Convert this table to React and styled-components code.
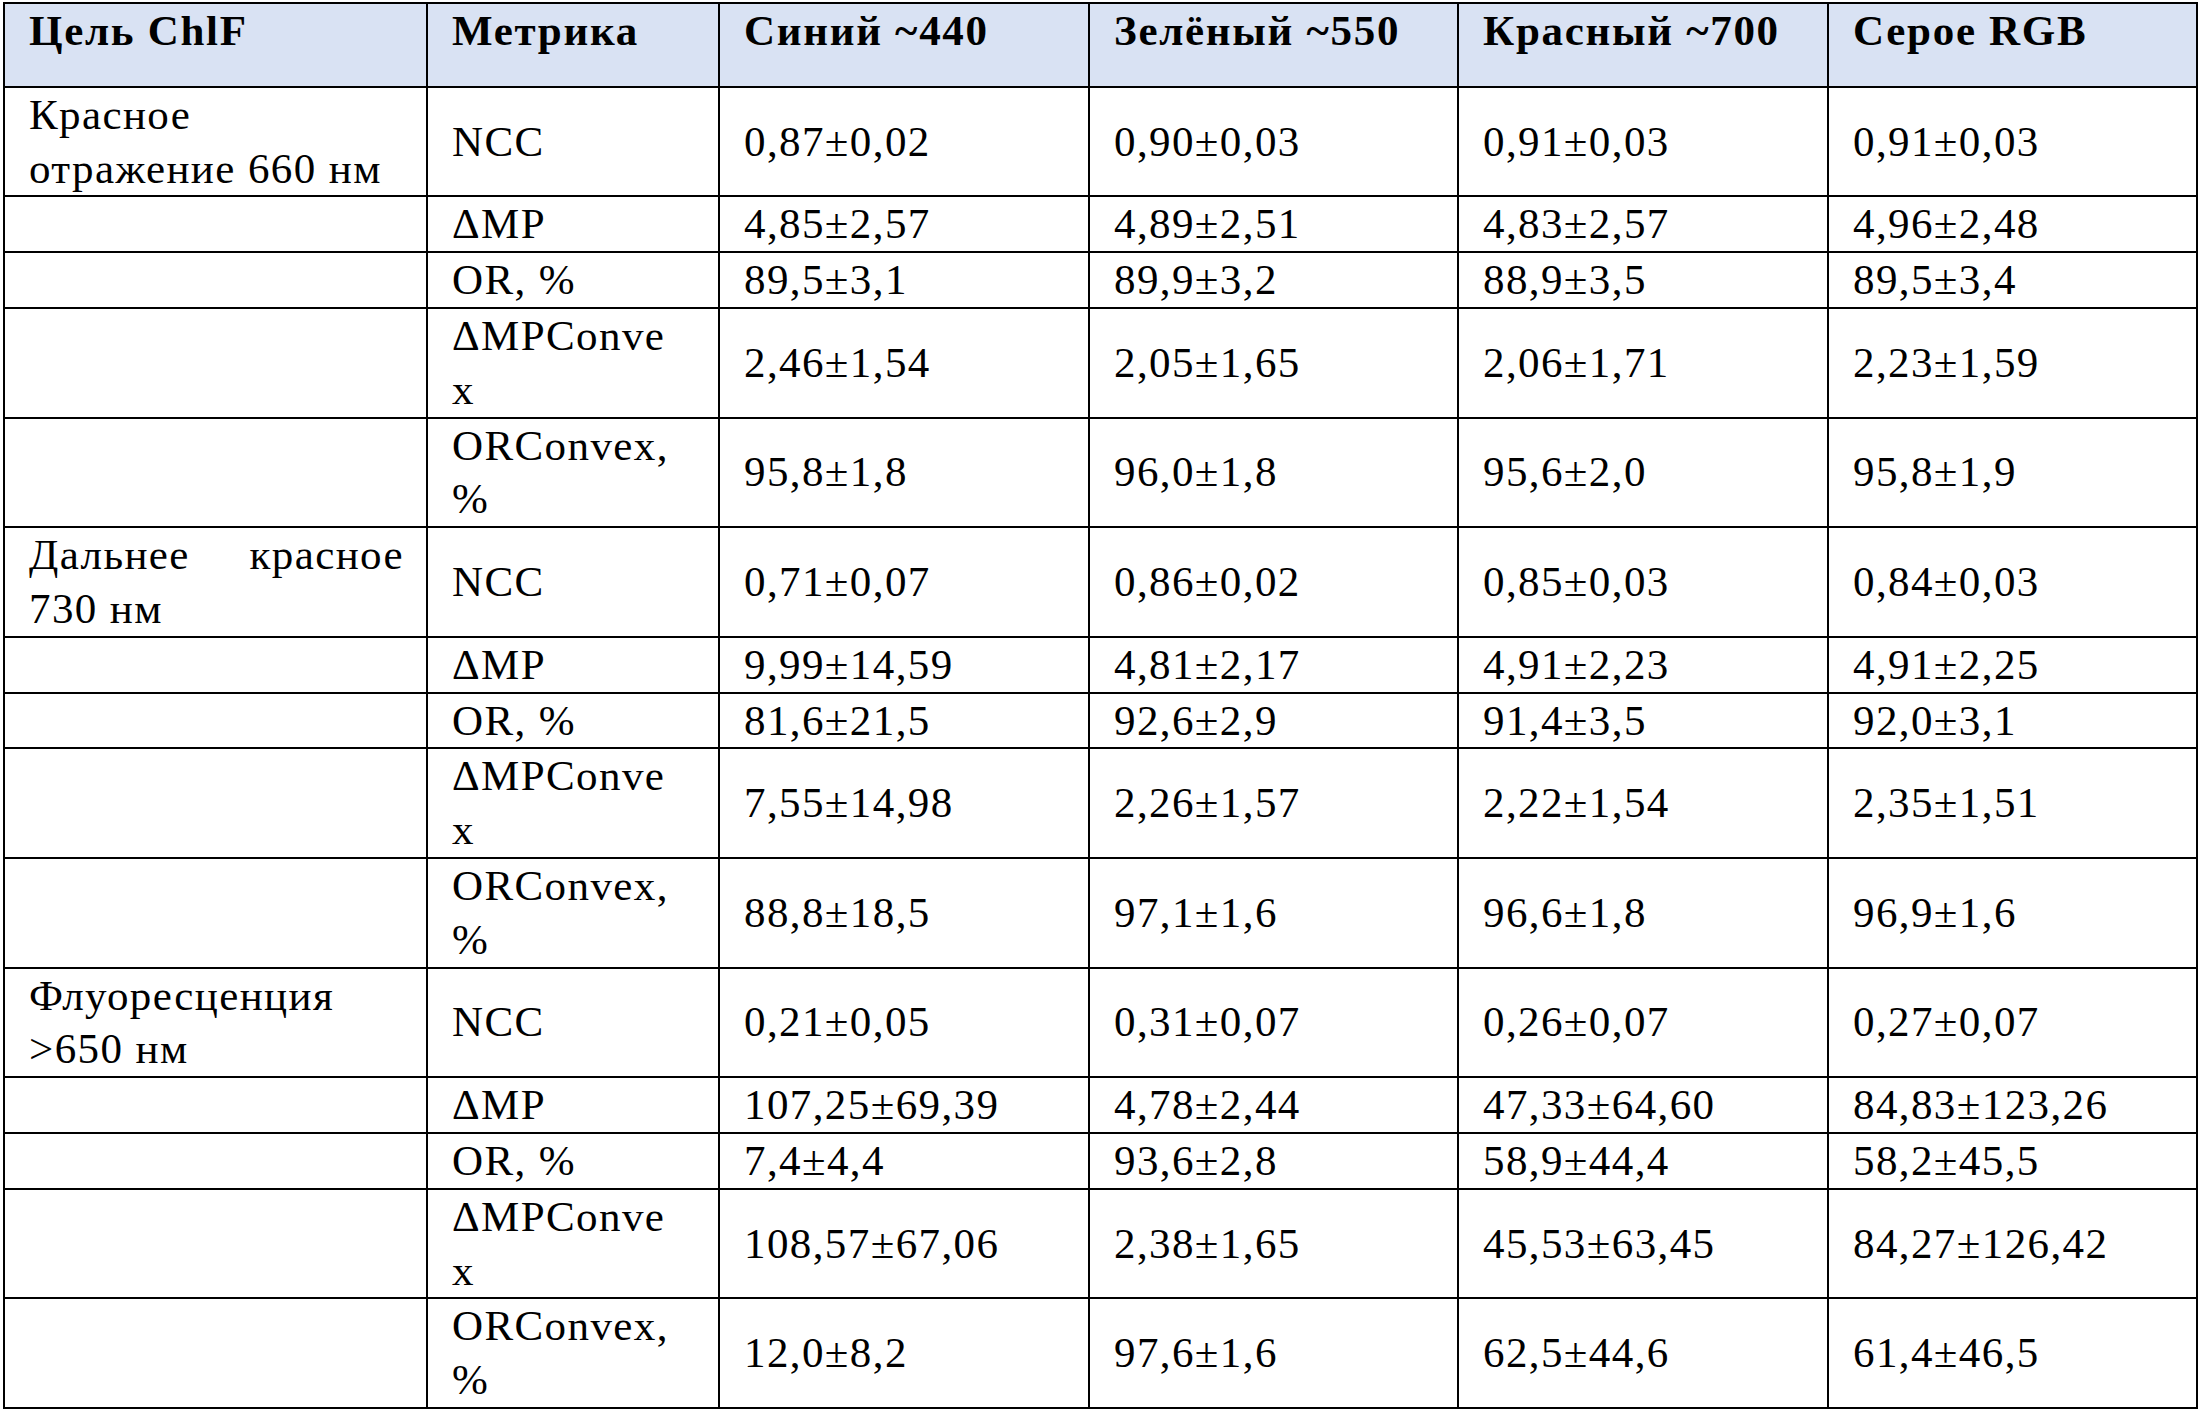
import React from 'react'
import styled, { createGlobalStyle } from 'styled-components'

const GlobalStyle = createGlobalStyle`
  html, body {
    margin: 0;
    padding: 0;
    background: #ffffff;
  }
`

const Page = styled.div`
  padding: 2px 0 0 3px;
  font-family: "Liberation Serif", "Times New Roman", serif;
  color: #000000;
`

const Table = styled.table`
  width: 2195px;
  table-layout: fixed;
  border-collapse: collapse;
  font-size: 43px;
  letter-spacing: 1.4px;
  line-height: 53.8px;
`

const HeadCell = styled.th`
  background: #d9e2f3;
  border: 2px solid #000;
  padding: 0 22px 28px 24px;
  text-align: left;
  vertical-align: top;
  font-weight: 700;
  letter-spacing: 1.7px;
  white-space: nowrap;
`

const Cell = styled.td`
  border: 2px solid #000;
  padding: 0 22px 0 24px;
  vertical-align: middle;
  text-align: ${p => (p.$justify ? 'justify' : 'left')};
  white-space: ${p => (p.$justify ? 'normal' : 'nowrap')};
`

const columns = [423, 292, 370, 369, 370, 369]

const headers = ['Цель ChlF', 'Метрика', 'Синий ~440', 'Зелёный ~550', 'Красный ~700', 'Серое RGB']

const metrics = [
  ['NCC'],
  ['ΔMP'],
  ['OR, %'],
  ['ΔMPConve', 'x'],
  ['ORConvex,', '%'],
]

const groups = [
  {
    target: 'Красное отражение 660 нм',
    values: [
      ['0,87±0,02', '0,90±0,03', '0,91±0,03', '0,91±0,03'],
      ['4,85±2,57', '4,89±2,51', '4,83±2,57', '4,96±2,48'],
      ['89,5±3,1', '89,9±3,2', '88,9±3,5', '89,5±3,4'],
      ['2,46±1,54', '2,05±1,65', '2,06±1,71', '2,23±1,59'],
      ['95,8±1,8', '96,0±1,8', '95,6±2,0', '95,8±1,9'],
    ],
  },
  {
    target: 'Дальнее красное 730 нм',
    values: [
      ['0,71±0,07', '0,86±0,02', '0,85±0,03', '0,84±0,03'],
      ['9,99±14,59', '4,81±2,17', '4,91±2,23', '4,91±2,25'],
      ['81,6±21,5', '92,6±2,9', '91,4±3,5', '92,0±3,1'],
      ['7,55±14,98', '2,26±1,57', '2,22±1,54', '2,35±1,51'],
      ['88,8±18,5', '97,1±1,6', '96,6±1,8', '96,9±1,6'],
    ],
  },
  {
    target: 'Флуоресценция >650 нм',
    values: [
      ['0,21±0,05', '0,31±0,07', '0,26±0,07', '0,27±0,07'],
      ['107,25±69,39', '4,78±2,44', '47,33±64,60', '84,83±123,26'],
      ['7,4±4,4', '93,6±2,8', '58,9±44,4', '58,2±45,5'],
      ['108,57±67,06', '2,38±1,65', '45,53±63,45', '84,27±126,42'],
      ['12,0±8,2', '97,6±1,6', '62,5±44,6', '61,4±46,5'],
    ],
  },
]

const MetricLabel = ({ lines }) =>
  lines.map((line, i) => (
    <React.Fragment key={i}>
      {i > 0 && <br />}
      {line}
    </React.Fragment>
  ))

export default function App() {
  return (
    <Page>
      <GlobalStyle />
      <Table>
        <colgroup>
          {columns.map((w, i) => <col key={i} style={{ width: w }} />)}
        </colgroup>
        <thead>
          <tr>
            {headers.map(h => <HeadCell key={h}>{h}</HeadCell>)}
          </tr>
        </thead>
        <tbody>
          {groups.map(group =>
            group.values.map((row, i) => (
              <tr key={group.target + i}>
                <Cell $justify>{i === 0 ? group.target : ''}</Cell>
                <Cell><MetricLabel lines={metrics[i]} /></Cell>
                {row.map((v, j) => <Cell key={j}>{v}</Cell>)}
              </tr>
            ))
          )}
        </tbody>
      </Table>
    </Page>
  )
}
